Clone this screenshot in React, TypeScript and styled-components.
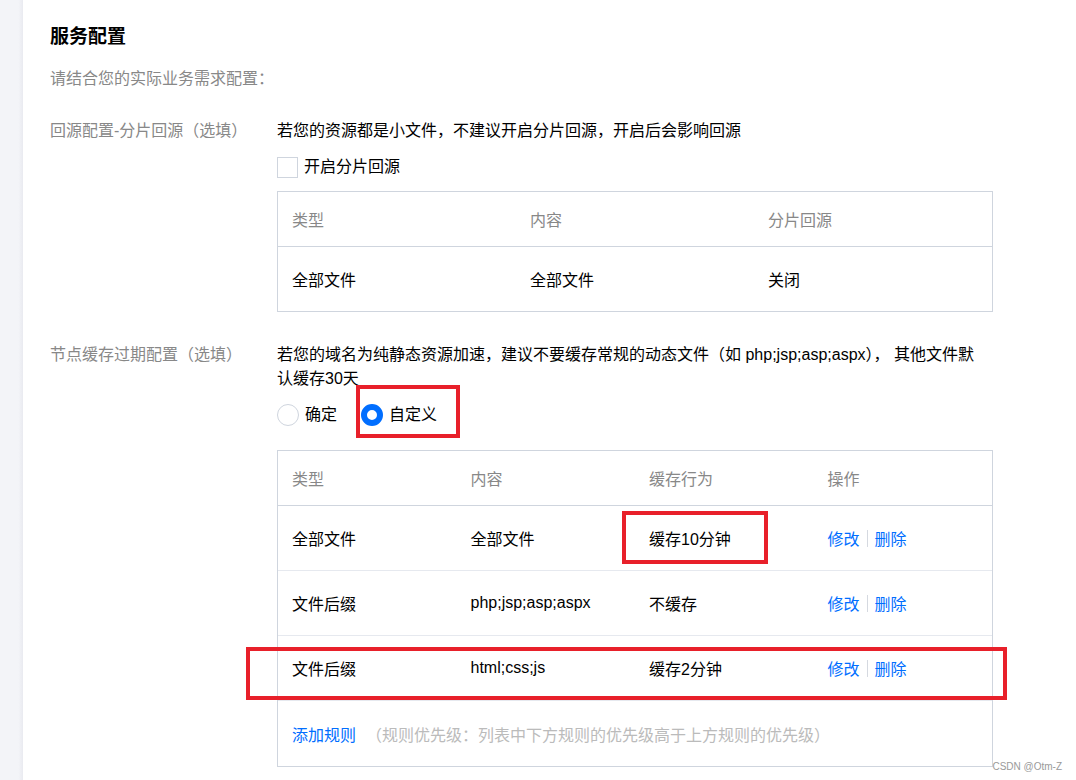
import React from 'react';
import styled, { createGlobalStyle, css } from 'styled-components';

const GlobalStyle = createGlobalStyle`
  html, body {
    margin: 0;
    padding: 0;
    background: #fff;
  }

  body {
    font-family: "Liberation Sans", "Noto Sans CJK SC", sans-serif;
    font-size: 16px;
    color: #000;
  }
`;

const Page = styled.div`
  display: flex;
  min-height: 780px;
  position: relative;
`;

const SideStripe = styled.div`
  width: 23px;
  flex-shrink: 0;
  background: linear-gradient(to right, #f3f4f8 0%, #f3f4f8 80%, #e9eaf0 100%);
`;

const Main = styled.main`
  flex: 1;
  padding: 23px 0 0 27px;
`;

const Title = styled.h2`
  margin: 0;
  font-size: 19px;
  line-height: 28px;
  font-weight: bold;
  color: #000;
`;

const Intro = styled.p`
  margin: 16px 0 0;
  line-height: 24px;
  color: #888;
`;

const FormRow = styled.div<{ $gap: number }>`
  display: grid;
  grid-template-columns: 227px 716px;
  margin-top: ${(p) => p.$gap}px;
`;

const Label = styled.div<{ $lh: number }>`
  color: #888;
  line-height: ${(p) => p.$lh}px;
`;

const Desc = styled.div<{ $lh: number; $max?: number }>`
  line-height: ${(p) => p.$lh}px;
  max-width: ${(p) => (p.$max ? `${p.$max}px` : 'none')};
  color: #000;
`;

const OptionRow = styled.div<{ $gap: number }>`
  display: flex;
  align-items: center;
  gap: 24px;
  height: 22px;
  margin-top: ${(p) => p.$gap}px;
`;

const Option = styled.label`
  position: relative;
  display: flex;
  align-items: center;
  gap: 6px;
  line-height: 22px;
`;

const CheckBox = styled.span`
  width: 19px;
  height: 19px;
  border: 1px solid #cfd5de;
  background: #fff;
`;

const Radio = styled.span<{ $checked?: boolean }>`
  box-sizing: border-box;
  width: 22px;
  height: 22px;
  border-radius: 50%;
  border: 1px solid #cfd5de;
  background: #fff;

  ${(p) =>
    p.$checked &&
    css`
      border: 6px solid #006eff;
    `}
`;

const Table = styled.div<{ $cols: number; $gap: number }>`
  display: grid;
  grid-template-columns: repeat(${(p) => p.$cols}, 1fr);
  border: 1px solid #cfd5de;
  margin-top: ${(p) => p.$gap}px;
  position: relative;
`;

const HeadRow = styled.div`
  display: contents;
`;

const HeadCell = styled.div`
  height: 54px;
  display: flex;
  align-items: center;
  padding: 0 14px;
  color: #888;
  border-bottom: 1px solid #cfd5de;
`;

const Row = styled.div`
  grid-column: 1 / -1;
  display: grid;
  grid-template-columns: subgrid;
  position: relative;

  & + & {
    border-top: 1px solid #e6e9ef;
  }
`;

const Cell = styled.div`
  height: 64px;
  display: flex;
  align-items: center;
  padding: 0 14px;
  position: relative;
`;

const FootRow = styled.div`
  grid-column: 1 / -1;
  height: 65px;
  display: flex;
  align-items: center;
  padding: 0 14px;
  border-top: 1px solid #e6e9ef;
`;

const Link = styled.a`
  color: #006eff;
  text-decoration: none;
  cursor: pointer;
`;

const Divider = styled.span`
  display: inline-block;
  width: 1px;
  height: 17px;
  background: #d5d9e0;
  margin: 0 7px;
`;

const Note = styled.span`
  color: #bbb;
  margin-left: 10px;
`;

// red annotation boxes drawn over the screenshot
const Mark = styled.div<{ $l: number; $t: number; $w: number; $h: number }>`
  position: absolute;
  left: ${(p) => p.$l}px;
  top: ${(p) => p.$t}px;
  width: ${(p) => p.$w}px;
  height: ${(p) => p.$h}px;
  box-sizing: border-box;
  border: 4px solid #e8202a;
  pointer-events: none;
`;

const Watermark = styled.div`
  position: absolute;
  right: 14px;
  bottom: 8px;
  font-family: "Liberation Sans", sans-serif;
  font-size: 10px;
  color: #9a9a9a;
`;

const rules = [
  { type: '全部文件', content: '全部文件', action: '缓存10分钟' },
  { type: '文件后缀', content: 'php;jsp;asp;aspx', action: '不缓存' },
  { type: '文件后缀', content: 'html;css;js', action: '缓存2分钟' },
];

function App() {
  return (
    <Page>
      <GlobalStyle />
      <SideStripe />
      <Main>
        <Title>服务配置</Title>
        <Intro>请结合您的实际业务需求配置：</Intro>

        <FormRow $gap={29}>
          <Label $lh={22}>回源配置-分片回源（选填）</Label>
          <div>
            <Desc $lh={22}>若您的资源都是小文件，不建议开启分片回源，开启后会影响回源</Desc>
            <OptionRow $gap={14}>
              <Option>
                <CheckBox />
                开启分片回源
              </Option>
            </OptionRow>
            <Table $cols={3} $gap={13}>
              <HeadRow>
                <HeadCell>类型</HeadCell>
                <HeadCell>内容</HeadCell>
                <HeadCell>分片回源</HeadCell>
              </HeadRow>
              <Row>
                <Cell>全部文件</Cell>
                <Cell>全部文件</Cell>
                <Cell>关闭</Cell>
              </Row>
            </Table>
          </div>
        </FormRow>

        <FormRow $gap={31}>
          <Label $lh={24}>节点缓存过期配置（选填）</Label>
          <div>
            <Desc $lh={24} $max={706}>
              若您的域名为纯静态资源加速，建议不要缓存常规的动态文件（如 php;jsp;asp;aspx），
              其他文件默认缓存30天
            </Desc>
            <OptionRow $gap={13}>
              <Option>
                <Radio />
                确定
              </Option>
              <Option>
                <Radio $checked />
                自定义
                <Mark $l={-5} $t={-19} $w={104} $h={53} />
              </Option>
            </OptionRow>
            <Table $cols={4} $gap={24}>
              <HeadRow>
                <HeadCell>类型</HeadCell>
                <HeadCell>内容</HeadCell>
                <HeadCell>缓存行为</HeadCell>
                <HeadCell>操作</HeadCell>
              </HeadRow>
              {rules.map((r, i) => (
                <Row key={i}>
                  <Cell>{r.type}</Cell>
                  <Cell>{r.content}</Cell>
                  <Cell>
                    {r.action}
                    {i === 0 && <Mark $l={-13} $t={5} $w={146} $h={53} />}
                  </Cell>
                  <Cell>
                    <Link>修改</Link>
                    <Divider />
                    <Link>删除</Link>
                  </Cell>
                  {i === 2 && <Mark $l={-32} $t={11} $w={761} $h={53} />}
                </Row>
              ))}
              <FootRow>
                <Link>添加规则</Link>
                <Note>（规则优先级：列表中下方规则的优先级高于上方规则的优先级）</Note>
              </FootRow>
            </Table>
          </div>
        </FormRow>
      </Main>
      <Watermark>CSDN @Otm-Z</Watermark>
    </Page>
  );
}

export default App;
